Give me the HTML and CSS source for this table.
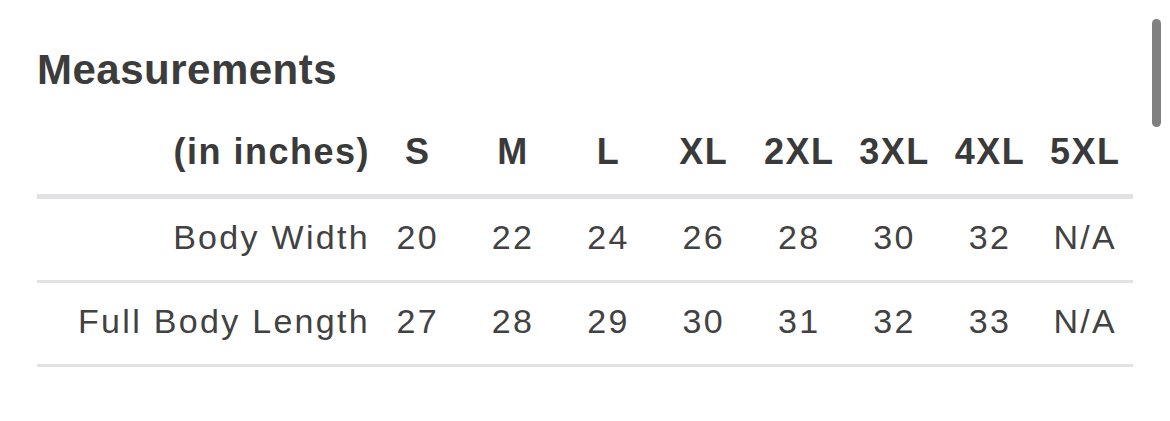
FILE: index.html
```html
<!DOCTYPE html>
<html lang="en">
<head>
    <meta charset="UTF-8">
    <meta name="viewport" content="width=device-width, initial-scale=1.0">
    <title>Measurements</title>
    <link rel="stylesheet" href="styles.css">
</head>
<body>
    <div class="page">
        <h2 class="title">Measurements</h2>

        <table class="size-table">
            <colgroup>
                <col class="label-col">
                <col span="8">
            </colgroup>
            <thead>
                <tr>
                    <th class="label">(in inches)</th>
                    <th>S</th>
                    <th>M</th>
                    <th>L</th>
                    <th>XL</th>
                    <th>2XL</th>
                    <th>3XL</th>
                    <th>4XL</th>
                    <th>5XL</th>
                </tr>
            </thead>
            <tbody>
                <tr>
                    <td class="label">Body Width</td>
                    <td>20</td>
                    <td>22</td>
                    <td>24</td>
                    <td>26</td>
                    <td>28</td>
                    <td>30</td>
                    <td>32</td>
                    <td>N/A</td>
                </tr>
                <tr>
                    <td class="label">Full Body Length</td>
                    <td>27</td>
                    <td>28</td>
                    <td>29</td>
                    <td>30</td>
                    <td>31</td>
                    <td>32</td>
                    <td>33</td>
                    <td>N/A</td>
                </tr>
            </tbody>
        </table>
    </div>

    <div class="scrollbar"></div>
</body>
</html>
```

FILE: styles.css
```css
body {
    margin: 0;
    background: #ffffff;
    font-family: "Liberation Sans", Arial, Helvetica, sans-serif;
    color: #424242;
}
.page {
    padding: 46px 37px 0 37px;
}
.title {
    margin: 0;
    font-size: 42px;
    line-height: 48px;
    font-weight: bold;
    letter-spacing: 0.5px;
    color: #3c3c3c;
}
.size-table {
    width: 1096px;
    margin-top: 18px;
    table-layout: fixed;
    border-collapse: separate;
    border-spacing: 0;
}
.label-col {
    width: 333px;
}
.size-table th {
    padding: 20px 0 22px 0;
    font-size: 36px;
    line-height: 40px;
    font-weight: bold;
    letter-spacing: 1.5px;
    text-align: center;
    color: #3a3a3a;
    border-bottom: 5px solid #e2e2e4;
}
.size-table td {
    padding: 18px 0 23px 0;
    font-size: 34px;
    line-height: 40px;
    letter-spacing: 2.3px;
    text-align: center;
    border-bottom: 3px solid #e2e2e4;
}
.size-table .label {
    text-align: right;
    padding-right: 0;
}
.scrollbar {
    position: absolute;
    top: 19px;
    left: 1152px;
    width: 9px;
    height: 108px;
    border-radius: 5px;
    background: #808080;
}
```
